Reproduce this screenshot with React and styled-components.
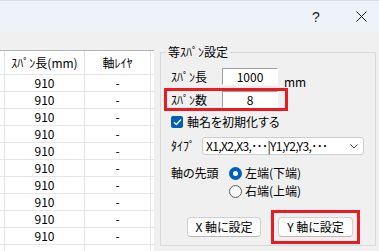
import React from 'react';
import styled, { createGlobalStyle } from 'styled-components';

const Global = createGlobalStyle`
  html, body { margin: 0; padding: 0; background: #f0f0f0; }
  body {
    width: 379px; height: 251px; overflow: hidden;
    font-family: "Noto Sans CJK JP", "Noto Sans", sans-serif;
    font-size: 12px; color: #000;
    font-feature-settings: "palt";
  }
  * { box-sizing: border-box; }
`;

const Window = styled.div`
  width: 379px; height: 251px; overflow: hidden;
  display: flex; flex-direction: column; background: #f0f0f0;
`;

const TitleBar = styled.div`
  flex: none; height: 32px;
  border-top: 1px solid #dcdcdc;
  background: #eef3f9;
  display: flex; justify-content: flex-end; align-items: stretch;
`;

const TitleButton = styled.div`
  width: ${p => p.$w}px;
  display: flex; align-items: center; justify-content: center;
  font-family: "Liberation Sans", sans-serif; font-size: 14px; color: #1a1a1a;
`;

const Body = styled.div`
  flex: 1; min-height: 0;
  display: flex; align-items: flex-start;
  padding-top: 18px;
`;

const Table = styled.div`
  flex: none; width: 154px; height: 201px; overflow: hidden;
  background: #fff; border-top: 1px solid #b4b4b4;
  display: grid;
  grid-template-columns: 5px 80px 66px 3px;
  grid-template-rows: 24px;
  grid-auto-rows: 17px;
`;

const Cell = styled.div`
  border-right: ${p => (p.$last ? 'none' : '1px solid #e6e6e6')};
  border-bottom: 1px solid #e6e6e6;
  display: flex; align-items: center; justify-content: center;
  line-height: 1; white-space: nowrap;
`;

const GroupBox = styled.div`
  position: relative; flex: none;
  margin: 2px 0 0 6px;
  width: 216px; height: 194px;
  border: 1px solid #d9d9d9;
  padding: 15px 0 0 10px;
  display: flex; flex-direction: column; align-items: flex-start;
`;

const GroupTitle = styled.div`
  position: absolute; top: -8px; left: 5px;
  padding: 0 2px; background: #f0f0f0;
  line-height: 14px;
`;

const FieldRow = styled.div`
  display: flex; align-items: center;
  height: 17px;
  margin-top: ${p => p.$mt || 0}px;
  ${p => p.$highlight && `
    margin-left: -4px;
    padding: 0 7px 0 4px;
    outline: 3px solid #e81b23;
  `}
`;

const FieldLabel = styled.div`
  width: ${p => p.$w}px; flex: none; line-height: 1; white-space: nowrap;
`;

const TextBox = styled.div`
  width: 56px; height: 17px;
  background: #fff;
  border-top: 1px solid #a0a0a0; border-left: 1px solid #a0a0a0;
  border-right: 1px solid #fff; border-bottom: 1px solid #fff;
  display: flex; align-items: center; justify-content: center;
  line-height: 1;
`;

const Unit = styled.div`
  margin-left: 6px; align-self: flex-end; line-height: 1; margin-bottom: -3px;
`;

const CheckRow = styled.div`
  display: flex; align-items: center; gap: 4px;
  height: 15px; margin-top: 6px; line-height: 1;
`;

const CheckBox = styled.div`
  width: 12px; height: 12px; border-radius: 2px;
  background: #005fb8;
  display: flex; align-items: center; justify-content: center;
`;

const SelectRow = styled.div`
  display: flex; align-items: center;
  height: 18px; margin-top: 8px;
`;

const SelectBox = styled.div`
  width: 162px; height: 18px;
  background: #fff; border: 1px solid #cccccc; border-radius: 3px;
  display: flex; align-items: center; justify-content: space-between;
  padding: 0 5px 0 3px; line-height: 1; white-space: nowrap;
`;

const SelectText = styled.span`
  letter-spacing: -0.6px;
`;

const RadioGroup = styled.div`
  display: grid; grid-template-columns: 58px auto;
  grid-auto-rows: 18px; align-items: center;
  margin-top: 9px; line-height: 1;
`;

const RadioOption = styled.div`
  grid-column: 2;
  display: flex; align-items: center; gap: 3px; white-space: nowrap;
`;

const RadioCircle = styled.div`
  width: 13px; height: 13px; border-radius: 50%;
  display: flex; align-items: center; justify-content: center;
  ${p => (p.$checked
    ? 'background: #005fb8;'
    : 'background: #f9f9f9; border: 1px solid #5c5c5c;')}
`;

const RadioDot = styled.div`
  width: 5px; height: 5px; border-radius: 50%; background: #fff;
`;

const ButtonRow = styled.div`
  display: flex; align-items: center; gap: 17px;
  margin-top: 17px; padding-left: 16px;
`;

const HighlightFrame = styled.div`
  display: flex;
  margin: -7px;
  padding: 4px;
  border: 3px solid #e81b23;
`;

const Button = styled.div`
  width: ${p => p.$w}px; height: 20px;
  background: #fdfdfd;
  border: 1px solid #d0d0d0; border-bottom-color: #b8b8b8;
  border-radius: 4px;
  display: flex; align-items: center; justify-content: center;
  line-height: 1; white-space: nowrap;
`;

const rows = Array.from({ length: 10 }, () => ['910', '-']);

export default function App() {
  return (
    <>
      <Global />
      <Window>
        <TitleBar>
          <TitleButton $w={54}>?</TitleButton>
          <TitleButton $w={36}>
            <svg width="11" height="11" viewBox="0 0 11 11">
              <path d="M0.5 0.5 L10.5 10.5 M10.5 0.5 L0.5 10.5" stroke="#1a1a1a" strokeWidth="1" fill="none" />
            </svg>
          </TitleButton>
        </TitleBar>
        <Body>
          <Table>
            <Cell />
            <Cell>ｽﾊﾟﾝ長(mm)</Cell>
            <Cell>軸ﾚｲﾔ</Cell>
            <Cell $last />
            {[...rows, ['', '']].map((r, i) => (
              <React.Fragment key={i}>
                <Cell />
                <Cell>{r[0]}</Cell>
                <Cell>{r[1]}</Cell>
                <Cell $last />
              </React.Fragment>
            ))}
          </Table>
          <GroupBox>
            <GroupTitle>等ｽﾊﾟﾝ設定</GroupTitle>
            <FieldRow>
              <FieldLabel $w={51}>ｽﾊﾟﾝ長</FieldLabel>
              <TextBox>1000</TextBox>
              <Unit>mm</Unit>
            </FieldRow>
            <FieldRow $mt={6} $highlight>
              <FieldLabel $w={51}>ｽﾊﾟﾝ数</FieldLabel>
              <TextBox>8</TextBox>
            </FieldRow>
            <CheckRow>
              <CheckBox>
                <svg width="9" height="8" viewBox="0 0 9 8">
                  <path d="M1 4.2 L3.4 6.5 L8 1.5" stroke="#fff" strokeWidth="1.3" fill="none" />
                </svg>
              </CheckBox>
              軸名を初期化する
            </CheckRow>
            <SelectRow>
              <FieldLabel $w={31}>ﾀｲﾌﾟ</FieldLabel>
              <SelectBox>
                <SelectText>X1,X2,X3,･･･|Y1,Y2,Y3,･･･</SelectText>
                <svg width="8" height="5" viewBox="0 0 8 5">
                  <path d="M0.5 0.5 L4 4 L7.5 0.5" stroke="#555" strokeWidth="1" fill="none" />
                </svg>
              </SelectBox>
            </SelectRow>
            <RadioGroup>
              <div>軸の先頭</div>
              <RadioOption>
                <RadioCircle $checked><RadioDot /></RadioCircle>
                左端(下端)
              </RadioOption>
              <RadioOption>
                <RadioCircle />
                右端(上端)
              </RadioOption>
            </RadioGroup>
            <ButtonRow>
              <Button $w={74}>X 軸に設定</Button>
              <HighlightFrame>
                <Button $w={75}>Y 軸に設定</Button>
              </HighlightFrame>
            </ButtonRow>
          </GroupBox>
        </Body>
      </Window>
    </>
  );
}
